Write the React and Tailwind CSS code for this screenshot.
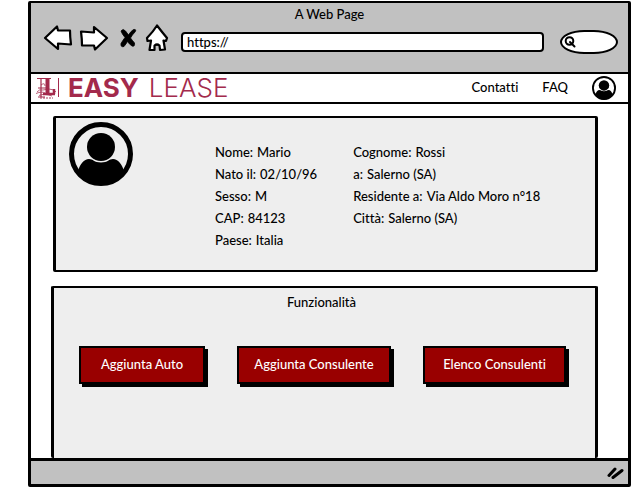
import React from "react";

function ArrowIcon({ className }) {
  return (
    <svg className={className} width="30" height="28" viewBox="0 0 30 28" fill="#fff" stroke="#000" strokeWidth="2.200" strokeLinejoin="round" aria-hidden="true">
      <path d="M2 14 L14 2.500 L15 6.500 L27 6.500 Q27 13 28 20.500 L15 19.500 L15 25 Z" />
    </svg>
  );
}

function CloseIcon() {
  return (
    <svg width="18" height="20" viewBox="0 0 18 20" fill="#000" stroke="#000" strokeWidth="0.800" aria-hidden="true">
      <path d="M2 3 Q4 0 6.500 3 L9.500 7 Q12 3 14.500 1.500 Q18 1 16 4 Q13 7 11.500 10 Q13 12 15.500 15 Q16 19 13 18 Q10 16 8.500 13.500 Q7 16 5 18.500 Q1.500 19.500 2 15.500 Q4 12 6 9.500 Q3 6 2 3 Z" />
    </svg>
  );
}

function HomeIcon() {
  return (
    <svg width="24" height="28" viewBox="0 0 24 28" fill="#fff" stroke="#000" strokeWidth="2.200" strokeLinejoin="round" aria-hidden="true">
      <path d="M12 1.500 Q17 8 22 14 L21 17 L18.500 16.500 L20 25.500 L15 26 L14.500 21.500 Q12 19.500 9.500 21.500 L9.500 26 L4.500 26 L6 16.500 L2.500 17 L2 14 Q8 8 12 1.500 Z" />
    </svg>
  );
}

function UserIcon({ className }) {
  return (
    <svg className={className} viewBox="0 0 64 64" aria-hidden="true">
      <circle cx="32" cy="32" r="29.5" fill="none" stroke="#000" strokeWidth="5" />
      <circle cx="32" cy="25" r="14" />
      <path d="M9 49 C11 42 15 37 20 37 C24 37 25 40.500 32 40.500 C39 40.500 40 37 44 37 C49 37 53 42 55 49 C50 58 41 63 32 63 C23 63 14 58 9 49 Z" />
    </svg>
  );
}

function LogoMark() {
  return (
    <svg width="24" height="22" viewBox="0 0 24 22" fill="none" stroke="#a32a4c" aria-hidden="true">
      <path d="M1 1.500 H15 M5 1 V20 M2 11 H10 M2 20 H9" strokeWidth="1.200" />
      <path d="M11.500 1 V17" strokeWidth="4" />
      <path d="M7 17 H19 M18 12 V17" strokeWidth="2.500" />
      <path d="M1 15 Q3 12 7 13 Q13 11 18 13 L20 15 M0 16.500 Q6 14 9 16 M3 18.500 Q8 16 16 19 M5 8 Q9 5 9 9" strokeWidth="1" opacity="0.750" />
      <path d="M4 21 H17" strokeWidth="1.500" strokeDasharray="2 1" opacity="0.600" />
      <path d="M22.500 1 V20" strokeWidth="1" />
    </svg>
  );
}

const personal = [["Nome", "Mario"], ["Nato il", "02/10/96"], ["Sesso", "M"], ["CAP", "84123"], ["Paese", "Italia"]];
const residence = [["Cognome", "Rossi"], ["a", "Salerno (SA)"], ["Residente a", "Via Aldo Moro n°18"], ["Città", "Salerno (SA)"]];
const actions = [
  { label: "Aggiunta Auto", width: "w-[126px]" },
  { label: "Aggiunta Consulente", width: "w-[154px]" },
  { label: "Elenco Consulenti", width: "w-[143px]" },
];

function Details({ items }) {
  return (
    <dl>
      {items.map(([label, value]) => (
        <div key={label} className="flex gap-1 whitespace-nowrap">
          <dt>{label}:</dt>
          <dd>{value}</dd>
        </div>
      ))}
    </dl>
  );
}

export default function App() {
  return (
    <div className="min-h-screen bg-white pt-px pr-px pb-px pl-7 flex flex-col font-['Lato','Liberation_Sans',sans-serif] text-[13px] font-medium text-black [font-variant-ligatures:none]">
      <div className="flex-1 flex flex-col border-[3px] border-t-2 border-black rounded-[2px]">
        <div className="bg-[#c1c1c1] border-b-2 border-black pb-5">
          <p className="text-center leading-5 pt-px">A Web Page</p>
          <div className="flex h-7 items-center pl-3 pr-2.5">
            <button type="button" aria-label="Indietro"><ArrowIcon /></button>
            <button type="button" aria-label="Avanti" className="ml-1.5"><ArrowIcon className="rotate-180" /></button>
            <button type="button" aria-label="Interrompi" className="ml-2.5"><CloseIcon /></button>
            <button type="button" aria-label="Home" className="ml-2"><HomeIcon /></button>
            <input type="text" aria-label="Indirizzo" defaultValue="https://" className="ml-3 mt-2 h-5 min-w-0 flex-1 rounded-[4px] border-2 border-black bg-white px-1" />
            <div className="ml-4 mt-2 flex h-6 w-[58px] items-center rounded-[50%/60%] border-2 border-black bg-white pl-0.5">
              <svg width="12" height="12" viewBox="0 0 12 12" fill="none" stroke="#000" strokeWidth="2" strokeLinecap="round" aria-hidden="true">
                <circle cx="5.500" cy="5" r="3.800" />
                <path d="M6 6 L10.500 10.500" />
              </svg>
              <input type="search" aria-label="Cerca" className="w-9 min-w-0 bg-transparent outline-none" />
            </div>
          </div>
        </div>

        <header className="flex h-[30px] items-center border-b-2 border-black pl-[5px] pr-3">
          <a href="#" aria-label="Easy Lease" className="flex items-center font-['Inter',sans-serif] text-[26px] leading-7 text-[#a32a4c]">
            <LogoMark />
            <span className="ml-2 font-bold">EASY</span>
            <span className="ml-2.5 font-light">LEASE</span>
          </a>
          <nav className="ml-auto flex items-center">
            <a href="#">Contatti</a>
            <a href="#" className="ml-6">FAQ</a>
            <a href="#" aria-label="Profilo" className="ml-6"><UserIcon className="size-6" /></a>
          </nav>
        </header>

        <main className="flex flex-1 flex-col gap-3.5 pt-3 pl-5 pr-[30px]">
          <section className="ml-0.5 flex border-[3px] border-t-2 border-b-2 border-black bg-[#eee] pl-[13px] pt-1 h-[156px] rounded-[2px]">
            <UserIcon className="size-16 shrink-0" />
            <div className="ml-[82px] mt-[19px] flex gap-9 leading-[22px]">
              <Details items={personal} />
              <Details items={residence} />
            </div>
          </section>
          <section className="flex flex-1 flex-col border-[3px] border-t-2 border-b-0 border-black bg-[#eee] rounded-[2px]">
            <h2 className="pt-0.5 pr-1.5 text-center leading-6">Funzionalità</h2>
            <div className="flex justify-center gap-8 pt-8 pr-1 text-white">
              {actions.map(({ label, width }) => (
                <button key={label} type="button" className={`h-[38px] whitespace-nowrap border-2 border-black bg-[#900] shadow-[3px_3px_0_#000] ${width}`}>
                  {label}
                </button>
              ))}
            </div>
          </section>
        </main>

        <footer className="flex h-[26px] items-center justify-end border-t-[3px] border-black bg-[#c1c1c1] pr-1">
          <svg width="17" height="12" viewBox="0 0 17 12" fill="none" stroke="#000" strokeWidth="3" strokeLinecap="round" aria-hidden="true">
            <path d="M2 8.500 L8 2 M6 10.500 L15 3.500" />
          </svg>
        </footer>
      </div>
    </div>
  );
}
